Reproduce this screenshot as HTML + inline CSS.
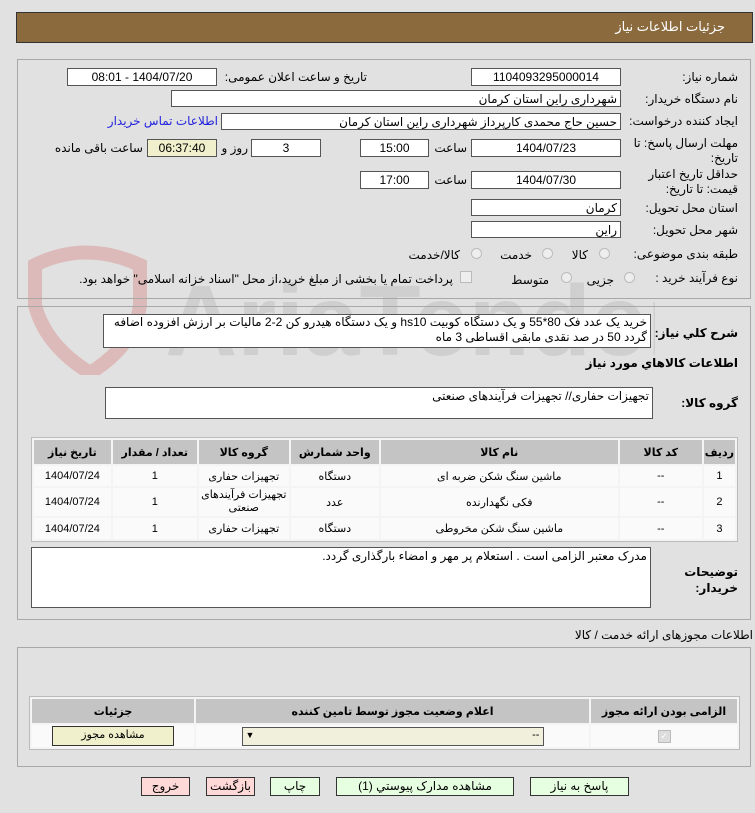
<!DOCTYPE html>
<html><head><meta charset="utf-8">
<style>
body{margin:0;width:755px;height:813px;background:#e1e1e1;font-family:Tahoma,"Liberation Sans","DejaVu Sans",sans-serif;font-size:12px;color:#000;position:relative;overflow:hidden}
.a{position:absolute;white-space:nowrap}
.box{position:absolute;background:#fff;border:1px solid #555;box-sizing:border-box;direction:rtl;padding:0 3px;line-height:16px;text-align:center}
.l{position:absolute;direction:rtl;text-align:right;white-space:nowrap}
.b{font-weight:bold}
.panel{position:absolute;border:1px solid #a8a8a8;box-sizing:border-box}
.radio{position:absolute;width:11px;height:11px;border-radius:50%;border:1px solid #bbb;background:#eee;box-sizing:border-box}
table{border-collapse:separate;border-spacing:2px;position:absolute;direction:rtl;background:#f4f4f4;border:1px solid #bbb}
th{background:#c4c4c4;font-weight:bold;height:22px;font-size:11px}
td{background:#fafafa;text-align:center;font-size:11px}
.btn{position:absolute;border:1px solid #333;box-sizing:border-box;text-align:center;line-height:16px;direction:rtl}
</style></head><body>
<div class="a" style="left:16px;top:12px;width:737px;height:31px;background:#8b6a3e;border:1px solid #333;box-sizing:border-box"></div>
<div class="l" style="right:30px;top:19px;color:#fff;font-size:13px">جزئیات اطلاعات نیاز</div>

<svg class="a" style="left:15px;top:245px" width="640" height="130">
<path d="M20 20 Q70 -5 125 20 L125 60 Q120 100 75 128 Q30 100 20 60 Z" fill="none" stroke="#dcb0b0" stroke-width="14" opacity="0.8"/>
<text x="150" y="110" font-family="Liberation Sans" font-weight="bold" font-size="100" fill="#c8c8c8" opacity="0.7">AriaTender.net</text>
</svg>

<div class="panel" style="left:17px;top:59px;width:734px;height:240px"></div>
<div class="panel" style="left:17px;top:306px;width:734px;height:314px"></div>

<div class="l" style="right:17px;top:70px">شماره نیاز:</div>
<div class="box" style="left:471px;top:68px;width:150px;height:18px">1104093295000014</div>
<div class="l" style="right:388px;top:70px">تاریخ و ساعت اعلان عمومی:</div>
<div class="box" style="left:67px;top:68px;width:150px;height:18px">1404/07/20 - 08:01</div>

<div class="l" style="right:17px;top:92px">نام دستگاه خریدار:</div>
<div class="box" style="left:171px;top:90px;width:450px;height:17px;text-align:right">شهرداری راین استان کرمان</div>

<div class="l" style="right:17px;top:114px">ایجاد کننده درخواست:</div>
<div class="box" style="left:221px;top:113px;width:400px;height:17px;text-align:right">حسین حاج محمدی کارپرداز شهرداری راین استان کرمان</div>
<div class="l" style="right:537px;top:114px;color:#2222dd">اطلاعات تماس خریدار</div>

<div class="l" style="right:17px;top:136px;line-height:15px">مهلت ارسال پاسخ: تا<br>تاریخ:</div>
<div class="box" style="left:471px;top:139px;width:150px;height:18px">1404/07/23</div>
<div class="l" style="right:288px;top:141px">ساعت</div>
<div class="box" style="left:360px;top:139px;width:69px;height:18px">15:00</div>
<div class="box" style="left:251px;top:139px;width:70px;height:18px">3</div>
<div class="l" style="right:507px;top:141px">روز و</div>
<div class="box" style="left:147px;top:139px;width:70px;height:18px;background:#f1f0cc">06:37:40</div>
<div class="l" style="right:612px;top:141px">ساعت باقی مانده</div>

<div class="l" style="right:17px;top:167px;line-height:15px">حداقل تاریخ اعتبار<br>قیمت: تا تاریخ:</div>
<div class="box" style="left:471px;top:171px;width:150px;height:18px">1404/07/30</div>
<div class="l" style="right:288px;top:173px">ساعت</div>
<div class="box" style="left:360px;top:171px;width:69px;height:18px">17:00</div>

<div class="l" style="right:17px;top:201px">استان محل تحویل:</div>
<div class="box" style="left:471px;top:199px;width:150px;height:17px;text-align:right">کرمان</div>
<div class="l" style="right:17px;top:223px">شهر محل تحویل:</div>
<div class="box" style="left:471px;top:221px;width:150px;height:17px;text-align:right">راین</div>

<div class="l" style="right:17px;top:247px">طبقه بندی موضوعی:</div>
<div class="radio" style="left:599px;top:248px"></div><div class="l" style="right:167px;top:248px">کالا</div>
<div class="radio" style="left:542px;top:248px"></div><div class="l" style="right:223px;top:248px">خدمت</div>
<div class="radio" style="left:471px;top:248px"></div><div class="l" style="right:295px;top:248px">کالا/خدمت</div>

<div class="l" style="right:17px;top:271px">نوع فرآیند خرید :</div>
<div class="radio" style="left:624px;top:272px"></div><div class="l" style="right:141px;top:273px">جزیی</div>
<div class="radio" style="left:561px;top:272px"></div><div class="l" style="right:206px;top:273px">متوسط</div>
<div class="a" style="left:460px;top:271px;width:12px;height:12px;border:1px solid #bbb;background:#eee;box-sizing:border-box"></div>
<div class="l" style="right:302px;top:272px">پرداخت تمام یا بخشی از مبلغ خرید،از محل "اسناد خزانه اسلامی" خواهد بود.</div>

<div class="l b" style="right:17px;top:326px">شرح کلي نیاز:</div>
<div class="box" style="left:103px;top:314px;width:548px;height:34px;text-align:right;line-height:15px;white-space:normal">خرید یک عدد فک 80*55 و یک دستگاه کوبیت hs10 و یک دستگاه هیدرو کن 2-2 مالیات بر ارزش افزوده اضافه گردد 50 در صد نقدی مابقی اقساطی 3 ماه</div>
<div class="l b" style="right:17px;top:356px">اطلاعات کالاهاي مورد نیاز</div>
<div class="l b" style="right:17px;top:396px">گروه کالا:</div>
<div class="box" style="left:105px;top:387px;width:548px;height:32px;text-align:right">تجهیزات حفاری// تجهیزات فرآیندهای صنعتی</div>

<table style="left:31px;top:437px;width:707px">
<tr><th style="width:27px">ردیف</th><th style="width:80px">کد کالا</th><th style="width:235px">نام کالا</th><th style="width:86px">واحد شمارش</th><th style="width:88px">گروه کالا</th><th style="width:82px">تعداد / مقدار</th><th>تاریخ نیاز</th></tr>
<tr style="height:20px"><td>1</td><td>--</td><td>ماشین سنگ شکن ضربه ای</td><td>دستگاه</td><td>تجهیزات حفاری</td><td>1</td><td>1404/07/24</td></tr>
<tr style="height:28px"><td>2</td><td>--</td><td>فکی نگهدارنده</td><td>عدد</td><td style="line-height:13px">تجهیزات فرآیندهای صنعتی</td><td>1</td><td>1404/07/24</td></tr>
<tr style="height:21px"><td>3</td><td>--</td><td>ماشین سنگ شکن مخروطی</td><td>دستگاه</td><td>تجهیزات حفاری</td><td>1</td><td>1404/07/24</td></tr>
</table>

<div class="l b" style="right:17px;top:564px;line-height:16px">توضیحات<br>خریدار:</div>
<div class="box" style="left:31px;top:547px;width:620px;height:61px;text-align:right">مدرک معتبر الزامی است . استعلام پر مهر و امضاء بارگذاری گردد.</div>

<div class="l" style="right:2px;top:628px">اطلاعات مجوزهای ارائه خدمت / کالا</div>
<div class="panel" style="left:17px;top:647px;width:734px;height:120px"></div>
<table style="left:29px;top:696px;width:711px">
<tr><th style="width:144px">الزامی بودن ارائه مجوز</th><th>اعلام وضعیت مجوز توسط تامین کننده</th><th style="width:160px">جزئیات</th></tr>
<tr style="height:21px"><td><span style="display:inline-block;width:11px;height:11px;background:#ddd;border:1px solid #bbb;font-size:9px;line-height:11px;color:#fff">✓</span></td>
<td><div style="margin:0 auto;width:300px;height:17px;border:1px solid #555;background:#f1f0dc;text-align:right;direction:rtl;line-height:15px;font-size:11px;position:relative">&nbsp;--<span style="position:absolute;left:3px;font-size:9px">▼</span></div></td>
<td><div style="margin:0 auto;width:120px;height:18px;border:1px solid #333;background:#f1f0cc;line-height:16px">مشاهده مجوز</div></td></tr>
</table>

<div class="btn" style="left:530px;top:777px;width:99px;height:19px;background:#e6ffe0">پاسخ به نیاز</div>
<div class="btn" style="left:336px;top:777px;width:178px;height:19px;background:#e6ffe0">مشاهده مدارک پیوستي (1)</div>
<div class="btn" style="left:270px;top:777px;width:50px;height:19px;background:#e6ffe0">چاپ</div>
<div class="btn" style="left:206px;top:777px;width:49px;height:19px;background:#ffd8d8">بازگشت</div>
<div class="btn" style="left:141px;top:777px;width:49px;height:19px;background:#ffd8d8">خروج</div>
</body></html>
